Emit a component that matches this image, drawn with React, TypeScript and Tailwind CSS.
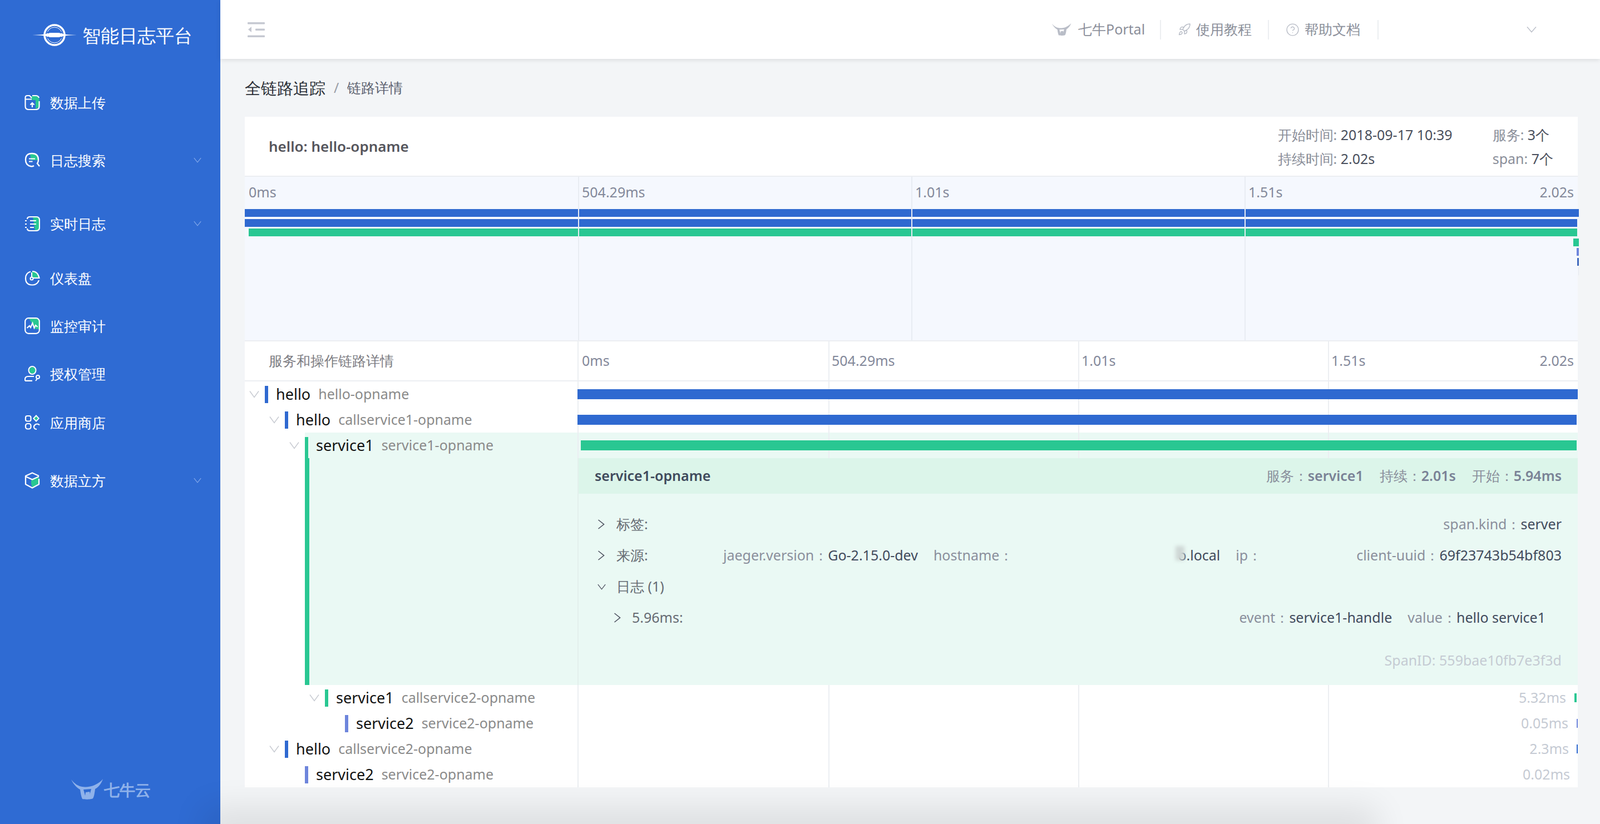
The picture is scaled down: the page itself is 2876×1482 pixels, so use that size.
import React from "react";
import { Rocket, CircleHelp } from "lucide-react";

const Chev = ({ cls = "" }: { cls?: string }) => (
  <svg viewBox="0 0 18 14" className={cls} fill="none" stroke="currentColor" strokeWidth="1.5" preserveAspectRatio="none">
    <path d="M1 1.5 L9 12.5 L17 1.5" />
  </svg>
);

const TreeChev = () => <Chev cls="w-[18px] h-[14px] text-[#c8cbd2]" />;

const Bull = ({ cls = "", color, hole }: { cls?: string; color: string; hole: string }) => (
  <svg viewBox="0 0 58 37" className={cls} fill={color}>
    <path d="M0 1 C6 9 13 13 20 14 C26 15 36 14 42 11 C48 8 53 5 57 0 C54 8 50 14 43 18 C42 26 41 32 39 35 C36 37 24 37 20 36 C18 32 17 26 16 19 C9 15 4 9 0 1 Z" />
    <path d="M22 19 L36 18 L33 29 L25 30 Z" fill={hole} />
    <path d="M25 30 C27 33 33 33 34 28 L33 23 L26 24 Z" fill={color} />
  </svg>
);

const G = "#29c792";

const IconUpload = () => (
  <svg viewBox="0 0 28 28" className="w-[28px] h-[28px]" fill="none">
    <path d="M10 3 H20 Q26.5 3 26.5 9 V22 L20 26 V10 H14 Z" fill={G} />
    <path d="M1.5 10 V6 Q1.5 2 5 2 H9 L13 6 M13 8.5 H1.5 M26.5 12 V21 Q26.5 27 20.5 27 H7.5 Q1.5 27 1.5 21 V10 M14 2 H20 Q25 2 26 6" stroke="white" strokeWidth="2.2" />
    <path d="M14 23 V15 M10.5 18.5 L14 15 L17.5 18.5" stroke="white" strokeWidth="2.2" />
  </svg>
);
const IconSearch = () => (
  <svg viewBox="0 0 28 28" className="w-[28px] h-[28px]" fill="none">
    <path d="M10 3 Q17 1 22 6 Q25 10 24 14 L12 14 Z" fill={G} />
    <path d="M17 24 Q14 26 11 25 Q2 23 2 13.5 Q2 2 13.5 2 Q25 2 25 13.5 Q25 17 23 20 L27 25" stroke="white" strokeWidth="2.4" />
    <path d="M8 11.5 H19 M8 16.5 H14.5" stroke="white" strokeWidth="2.2" />
  </svg>
);
const IconLog = () => (
  <svg viewBox="0 0 28 28" className="w-[28px] h-[28px]" fill="none">
    <path d="M15 2 H21 Q27 2 27 8 V21 Q27 27 21 27 H19 Z" fill={G} />
    <path d="M5 6 Q5 2 10 2 H21 Q27 2 27 8 V21 Q27 27 21 27 H10 Q5 27 5 23" stroke="white" strokeWidth="2.2" />
    <path d="M1 9 H4 M1 15 H4 M1 21 H4 M10 9 H21 M10 15 H21 M10 21 H17" stroke="white" strokeWidth="2.2" />
  </svg>
);
const IconPie = () => (
  <svg viewBox="0 0 28 28" className="w-[28px] h-[28px]" fill="none">
    <path d="M13 2 Q24 2 27 14 L14 14 Z" fill={G} />
    <path d="M11 2.5 Q2 5 2 14.5 Q2 26.5 14 26.5 Q23 26.5 26 18 M14 2 Q24 2 26.5 14 H15" stroke="white" strokeWidth="2.2" />
    <circle cx="13" cy="15" r="2.5" stroke="white" strokeWidth="2" />
    <path d="M13 4 V12" stroke="white" strokeWidth="2" />
  </svg>
);
const IconMon = () => (
  <svg viewBox="0 0 28 30" className="w-[28px] h-[30px]" fill="none">
    <path d="M8 2 H22 Q27 2 27 8 V21 L20 21 Z" fill={G} />
    <rect x="1.2" y="1.2" width="25.6" height="27.6" rx="6" stroke="white" strokeWidth="2.2" />
    <path d="M4.5 19 L9 15 L11 18 L14.5 10 L17.5 19 L20 14 L23.5 17" stroke="white" strokeWidth="2.2" />
  </svg>
);
const IconUser = () => (
  <svg viewBox="0 0 28 28" className="w-[28px] h-[28px]" fill="none">
    <ellipse cx="14" cy="8" rx="5.5" ry="6" fill={G} />
    <ellipse cx="14" cy="8" rx="6.5" ry="7" stroke="white" strokeWidth="2" />
    <path d="M1 27 V24 Q1 19 7 19 H17 M1 26.8 H14" stroke="white" strokeWidth="2.2" />
    <circle cx="24" cy="20" r="3" stroke="white" strokeWidth="2" />
    <path d="M23 23 L20 27" stroke="white" strokeWidth="2" />
  </svg>
);
const IconApps = () => (
  <svg viewBox="0 0 28 28" className="w-[28px] h-[28px]" fill="none">
    <rect x="2" y="2" width="9.5" height="9.5" rx="3" stroke="white" strokeWidth="2.2" />
    <rect x="2" y="16" width="9.5" height="9.5" rx="3.5" stroke="white" strokeWidth="2.2" />
    <path d="M21 0 L27 6.5 L21 13 L15 6.5 Z" fill="white" />
    <path d="M21 3 L24.5 6.5 L21 10 L17.5 6.5 Z" fill={G} />
    <path d="M27 18.5 Q24 15.5 20.5 17 Q16.5 19 17 22.5 Q18 26 22 26" stroke="white" strokeWidth="2.2" />
  </svg>
);
const IconCube = () => (
  <svg viewBox="0 0 28 30" className="w-[28px] h-[30px]" fill="none">
    <path d="M13 12 L26 8 V20 L15 28 Q10 22 13 12 Z" fill={G} />
    <path d="M26 7 L14 1.5 L2 7 V22 L14 28.5 L26 22 V12 M2 8 L14 13.5 L26 8" stroke="white" strokeWidth="2.3" strokeLinejoin="round" />
  </svg>
);

const nav = [
  { t: "数据上传", I: IconUpload, m: "mt-[28px]", c: false },
  { t: "日志搜索", I: IconSearch, m: "mt-[44px]", c: true },
  { t: "实时日志", I: IconLog, m: "mt-[54px]", c: true },
  { t: "仪表盘", I: IconPie, m: "mt-[38px]", c: false },
  { t: "监控审计", I: IconMon, m: "mt-[26px]", c: false },
  { t: "授权管理", I: IconUser, m: "mt-[26px]", c: false },
  { t: "应用商店", I: IconApps, m: "mt-[28px]", c: false },
  { t: "数据立方", I: IconCube, m: "mt-[44px]", c: true },
];

const Sidebar = () => (
  <aside className="w-[396px] h-full shrink-0 bg-[#2f6bd3] flex flex-col text-white">
    <div className="h-[126px] flex items-center pl-[58px]">
      <svg viewBox="0 0 80 42" className="w-[80px] h-[42px]" fill="none">
        <circle cx="40" cy="21" r="18" stroke="white" strokeWidth="3.5" />
        <circle cx="40" cy="21" r="14" stroke="white" strokeWidth="1" />
        <path d="M0 21 C18 20.5 26 19.5 32 17 L48 17 C54 19.5 62 20.5 80 21 C62 21.5 54 22.5 48 25 L32 25 C26 22.5 18 21.5 0 21 Z" fill="white" />
        <path d="M26 16 H54 M26 26 H54" stroke="#2f6bd3" strokeWidth="2" />
        <path d="M25 21 H55" stroke="white" strokeWidth="1" />
      </svg>
      <span className="ml-[10px] text-[33px] font-medium leading-none whitespace-nowrap">智能日志平台</span>
    </div>
    <nav className="flex flex-col">
      {nav.map(({ t, I, m, c }) => (
        <div key={t} className={`h-[60px] flex items-center pl-[44px] ${m}`}>
          <span className="w-[28px] flex justify-center"><I /></span>
          <span className="ml-[18px] text-[25px] font-medium leading-none">{t}</span>
          {c && <Chev cls="ml-auto mr-[34px] w-[14px] h-[10px] text-[#82a8ea]" />}
        </div>
      ))}
    </nav>
    <div className="mt-auto mb-[44px] flex items-center justify-center ml-[2px]">
      <Bull cls="w-[58px] h-[37px]" color="#8fb2ea" hole="#2f6bd3" />
      <span className="ml-[1px] text-[28px] font-bold leading-none text-[#8fb2ea]">七牛云</span>
    </div>
  </aside>
);

const Sep = () => <span className="block w-[2px] h-[35px] bg-[#eceef1]" />;

const Header = () => (
  <header className="relative z-10 h-[106px] shrink-0 bg-white shadow-[0_2px_8px_rgba(0,0,0,0.1)] flex items-center pl-[49px] text-[25px] text-[#8a8e99]">
    <svg viewBox="0 0 31 27" className="w-[31px] h-[27px]" fill="#c5c8d1">
      <rect x="0" y="0" width="31" height="3.5" rx="1" />
      <rect x="14" y="11.5" width="17" height="3.5" rx="1" />
      <rect x="0" y="23.5" width="31" height="3.5" rx="1" />
      <path d="M7 8 V18 L1 13 Z" />
    </svg>
    <div className="ml-auto flex items-center">
      <Bull cls="w-[35px] h-[24px]" color="#b9bdc7" hole="#ffffff" />
      <span className="ml-[12px] w-[117px] whitespace-nowrap">七牛Portal</span>
      <span className="ml-[30px]"><Sep /></span>
      <Rocket className="ml-[30px] w-[24px] h-[24px] text-[#b9bdc7]" strokeWidth={1.5} />
      <span className="ml-[9px] w-[100px] whitespace-nowrap">使用教程</span>
      <span className="ml-[29px]"><Sep /></span>
      <CircleHelp className="ml-[30px] w-[25px] h-[25px] text-[#b9bdc7]" strokeWidth={1.3} />
      <span className="ml-[9px] w-[100px] whitespace-nowrap">帮助文档</span>
      <span className="ml-[31px]"><Sep /></span>
      <Chev cls="ml-[266px] mr-[114px] w-[18px] h-[12px] text-[#b9bdc7]" />
    </div>
  </header>
);

const Ticks = ({ cls = "bg-[#eceef2]" }: { cls?: string }) => (
  <>
    <span className={`absolute top-0 bottom-0 left-[25%] w-[2px] ${cls}`} />
    <span className={`absolute top-0 bottom-0 left-[50%] w-[2px] ${cls}`} />
    <span className={`absolute top-0 bottom-0 left-[75%] w-[2px] ${cls}`} />
  </>
);

const BLUE = "#2f69d0";
const GREEN = "#29c792";
const PURPLE = "#6e85dc";

const miniBars = [
  { l: 0, w: 2398, c: BLUE },
  { l: 0, w: 2395, c: BLUE },
  { l: 7, w: 2388, c: GREEN },
  { l: 2388, w: 10, c: GREEN },
  { l: 2394, w: 4, c: PURPLE },
  { l: 2395, w: 3, c: "#3f69bd" },
  { l: 2397, w: 1, c: "#e4e8f2" },
];

const Minimap = () => (
  <section className="relative h-[294px] bg-[#f5f8fe] border-t-2 border-[#eceef2] box-content">
    <Ticks cls="bg-[#e8ecf3]" />
    <div className="grid grid-cols-4 h-[56px] items-center text-[25px] text-[#83889a]">
      <span className="pl-[7px]">0ms</span>
      <span className="pl-[7px]">504.29ms</span>
      <span className="pl-[7px]">1.01s</span>
      <span className="pl-[7px] flex justify-between pr-[7px]"><span>1.51s</span><span>2.02s</span></span>
    </div>
    <div className="flex flex-col gap-[3.5px] mt-[2px]">
      {miniBars.map((b, i) => (
        <div key={i} className="h-[14px]" style={{ marginLeft: b.l, width: b.w, background: b.c }} />
      ))}
    </div>
    <Ticks cls="bg-[#e8ecf3]" />
  </section>
);

type RowP = {
  d: string;
  chev?: boolean;
  color: string;
  name: string;
  op: string;
  hl?: boolean;
  bar?: { l: number; r: number; h?: string };
  label?: string;
  pr?: string;
  w?: string;
};

const Row = ({ d, chev, color, name, op, hl, bar, label, pr, w }: RowP) => (
  <div className="flex h-[46px]">
    <div className={`w-[600px] shrink-0 border-r-2 border-[#eceef2] flex items-stretch ${d}`}>
      <span className="w-[28px] shrink-0 flex items-center">{chev && <TreeChev />}</span>
      <div className={`flex-1 flex items-center ${hl ? "bg-[#eaf9f4]" : ""}`}>
        <span className={`w-[6px] ${hl ? "self-end h-[38px]" : "h-[31px]"}`} style={{ background: color }} />
        <span className="ml-[14px] text-[27px] text-[#111] whitespace-nowrap">{name}</span>
        <span className="ml-[14px] text-[25px] text-[#8a8a8a] whitespace-nowrap">{op}</span>
      </div>
    </div>
    <div className={`relative flex-1 flex items-center ${hl ? "bg-[#eaf9f4]" : ""} ${label ? `justify-end ${pr}` : ""}`}>
      <Ticks />
      {label && <span className="relative text-[25px] text-[#c5cad3] whitespace-nowrap">{label}</span>}
      {label && bar && <span className={`relative h-[16px] ${w}`} style={{ background: color }} />}
      {!label && bar && (
        <span className="relative h-[18px]" style={{ marginLeft: bar.l, marginRight: bar.r, flex: 1, background: bar.h || color }} />
      )}
    </div>
  </div>
);

const K = ({ children }: { children: React.ReactNode }) => <span className="text-[#8a8f9c] whitespace-nowrap">{children}：</span>;
const V = ({ children, cls = "" }: { children: React.ReactNode; cls?: string }) => <span className={`text-[#414a5c] whitespace-nowrap ${cls}`}>{children}</span>;
const RC = () => (
  <svg viewBox="0 0 13 18" className="w-[13px] h-[18px] text-[#4a4f5c]" fill="none" stroke="currentColor" strokeWidth="1.6">
    <path d="M1.5 1 L11.5 9 L1.5 17" />
  </svg>
);

const Detail = () => (
  <div className="flex h-[408px]">
    <div className="w-[600px] shrink-0 border-r-2 border-[#e3f0ec] pl-[108px]">
      <div className="h-full bg-[#eaf9f4] border-l-8 border-[#29c792]" />
    </div>
    <div className="flex-1 bg-[#eaf9f4] text-[25px]">
      <div className="h-[64px] bg-[#dcf5ea] flex items-center pl-[29px] pr-[29px]">
        <span className="font-semibold text-[#3f4a5c]">service1-opname</span>
        <div className="ml-auto flex gap-[29px]">
          <span className="text-[#8a8f9c]">服务：<b className="font-semibold text-[#7a8296]">service1</b></span>
          <span className="text-[#8a8f9c]">持续：<b className="font-semibold text-[#7a8296]">2.01s</b></span>
          <span className="text-[#8a8f9c]">开始：<b className="font-semibold text-[#7a8296]">5.94ms</b></span>
        </div>
      </div>
      <div className="pt-[27px] pl-[34px] pr-[29px]">
        <div className="h-[56px] flex items-center">
          <RC />
          <span className="ml-[21px] text-[#666b73]">标签:</span>
          <div className="ml-auto"><K>span.kind</K><V>server</V></div>
        </div>
        <div className="h-[56px] flex items-center">
          <RC />
          <span className="ml-[21px] w-[192px] text-[#666b73]">来源:</span>
          <K>jaeger.version</K><V>Go-2.15.0-dev</V>
          <span className="ml-[28px]"><K>hostname</K></span>
          <span className="relative ml-[296px]">
            <V>o.local</V>
            <span className="absolute left-[-4px] top-[2px] w-[16px] h-[26px] bg-[#cfd8d6] blur-[3px]" />
          </span>
          <span className="ml-[28px]"><K>ip</K></span>
          <div className="ml-auto"><K>client-uuid</K><V>69f23743b54bf803</V></div>
        </div>
        <div className="h-[56px] flex items-center">
          <Chev cls="w-[15px] h-[11px] text-[#4a4f5c]" />
          <span className="ml-[19px] text-[#666b73]">日志 (1)</span>
        </div>
        <div className="h-[56px] flex items-center pl-[29px]">
          <RC />
          <span className="ml-[20px] text-[#666b73]">5.96ms:</span>
          <div className="ml-auto pr-[29px] flex">
            <K>event</K><V>service1-handle</V>
            <span className="ml-[28px]"><K>value</K></span><V>hello service1</V>
          </div>
        </div>
        <div className="mt-[21px] h-[56px] flex items-center justify-end text-[#c5cbd3]">SpanID: 559bae10fb7e3f3d</div>
      </div>
    </div>
  </div>
);

const TraceCard = () => (
  <main className="ml-[44px] w-[2396px] bg-white">
    <div className="h-[106px] flex items-center pl-[43px] text-[25px]">
      <span className="font-semibold text-[#55555c] text-[26px]">hello: hello-opname</span>
      <div className="ml-auto grid grid-cols-[auto_auto] gap-x-[72px] gap-y-[13px] pr-[44px] leading-[30px] text-[#8a8e99]">
        <span>开始时间: <span className="text-[#4a4f5c]">2018-09-17 10:39</span></span>
        <span>服务: <span className="text-[#4a4f5c]">3个</span></span>
        <span>持续时间: <span className="text-[#4a4f5c]">2.02s</span></span>
        <span>span: <span className="text-[#4a4f5c]">7个</span></span>
      </div>
    </div>
    <Minimap />
    <div className="flex h-[70px] border-t-2 border-[#eceef2] box-content">
      <div className="w-[600px] shrink-0 border-r-2 border-[#eceef2] pl-[43px] flex items-center text-[25px] text-[#7c7c82]">服务和操作链路详情</div>
      <div className="relative flex-1 grid grid-cols-4 items-center text-[25px] text-[#83889a]">
        <Ticks />
        <span className="pl-[6px]">0ms</span>
        <span className="pl-[6px]">504.29ms</span>
        <span className="pl-[6px]">1.01s</span>
        <span className="pl-[6px] flex justify-between pr-[7px]"><span>1.51s</span><span>2.02s</span></span>
      </div>
    </div>
    <div className="border-t-2 border-[#eceef2]">
      <Row d="pl-[8px]" chev color={BLUE} name="hello" op="hello-opname" bar={{ l: -2, r: 0 }} />
      <Row d="pl-[44px]" chev color={BLUE} name="hello" op="callservice1-opname" bar={{ l: -2, r: 2 }} />
      <Row d="pl-[80px]" chev color={GREEN} name="service1" op="service1-opname" hl bar={{ l: 4, r: 2 }} />
      <Detail />
      <Row d="pl-[116px]" chev color={GREEN} name="service1" op="callservice2-opname" label="5.32ms" pr="pr-[2px]" w="ml-[15px] w-[4px]" bar={{ l: 0, r: 0 }} />
      <Row d="pl-[152px]" color={PURPLE} name="service2" op="service2-opname" label="0.05ms" w="ml-[15px] w-[2px]" bar={{ l: 0, r: 0 }} />
      <Row d="pl-[44px]" chev color={BLUE} name="hello" op="callservice2-opname" label="2.3ms" w="ml-[14px] w-[2px]" bar={{ l: 0, r: 0 }} />
      <Row d="pl-[80px]" color={PURPLE} name="service2" op="service2-opname" label="0.02ms" pr="pr-[14px]" />
    </div>
  </main>
);

export default function App() {
  return (
    <div className="relative flex w-full h-[1482px] overflow-hidden bg-[#f3f5f7] [font-family:'Liberation_Sans','Noto_Sans_CJK_SC',sans-serif]">
      <Sidebar />
      <div className="flex-1 flex flex-col min-w-0">
        <Header />
        <div className="h-[104px] shrink-0 flex items-center pl-[44px]">
          <span className="text-[29px] text-[#2a2e36]">全链路追踪</span>
          <span className="mx-[15px] text-[25px] text-[#9a9ea6]">/</span>
          <span className="text-[25px] text-[#5c6270]">链路详情</span>
        </div>
        <TraceCard />
      </div>
      <div className="absolute left-[396px] right-[430px] bottom-[-20px] h-[20px] shadow-[0_0_60px_30px_rgba(0,0,0,0.09)]" />
    </div>
  );
}
